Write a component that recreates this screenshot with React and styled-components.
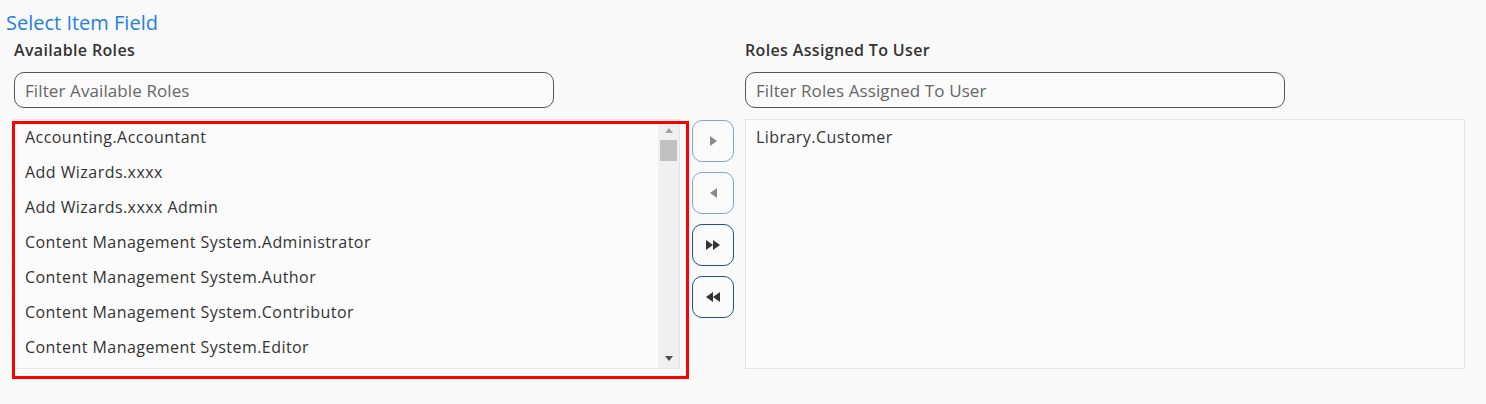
import React, { useState } from 'react';
import styled, { createGlobalStyle } from 'styled-components';

const GlobalStyle = createGlobalStyle`
  body {
    margin: 0;
    min-height: 404px;
    background: #f9f9f9;
    font-family: "Open Sans", "Noto Sans", sans-serif;
  }
`;

const Page = styled.div`
  padding: 10px 6px 20px 6px;
`;

const Title = styled.h2`
  margin: 0;
  font-size: 20px;
  font-weight: 400;
  line-height: 26px;
  color: #1f7fe5;
`;

const Columns = styled.div`
  display: flex;
  align-items: flex-start;
  margin-top: 2px;
  padding-left: 8px;
`;

const Column = styled.div`
  display: flex;
  flex-direction: column;
  width: ${p => p.$width}px;
`;

const Label = styled.div`
  font-size: 16px;
  font-weight: 600;
  color: #333;
  line-height: 24px;
  letter-spacing: 0.35px;
`;

const Filter = styled.input`
  box-sizing: border-box;
  width: 540px;
  height: 36px;
  margin-top: 10px;
  padding: 0 10px;
  border: 1px solid #555;
  border-radius: 10px;
  background: #fafafa;
  font-family: inherit;
  font-size: 17px;
  letter-spacing: 0.1px;
  color: #333;
  outline: none;

  &::placeholder {
    color: #666;
  }
`;

const ListWrap = styled.div`
  position: relative;
  margin-top: 11px;
  padding-bottom: ${p => (p.$highlight ? 10 : 0)}px;

  &::after {
    content: '';
    position: absolute;
    top: 2px;
    left: -2px;
    right: -9px;
    bottom: 0;
    border: 3px solid #ff0000;
    pointer-events: none;
    display: ${p => (p.$highlight ? 'block' : 'none')};
  }
`;

const ListBox = styled.div`
  box-sizing: border-box;
  display: flex;
  height: 250px;
  border: 1px solid #e4e4e4;
  background: #fbfbfb;
  overflow: hidden;
`;

const Options = styled.div`
  flex: 1;
  overflow: hidden;
`;

const Option = styled.div`
  height: 35px;
  line-height: 35px;
  padding-left: 10px;
  font-size: 16px;
  letter-spacing: 0.45px;
  color: #333;
  white-space: nowrap;
  cursor: default;
`;

const ScrollTrack = styled.div`
  width: 21px;
  background: #f0f0f0;
  display: flex;
  flex-direction: column;
  align-items: center;
`;

const ScrollArrow = styled.div`
  width: 0;
  height: 0;
  border-left: 4px solid transparent;
  border-right: 4px solid transparent;
  ${p => (p.$down
    ? 'border-top: 5px solid #505050; margin-top: auto; margin-bottom: 7px;'
    : 'border-bottom: 5px solid #a3a3a3; margin-top: 8px;')}
`;

const ScrollThumb = styled.div`
  width: 17px;
  height: 21px;
  margin-top: 7px;
  background: #c1c1c1;
`;

const Buttons = styled.div`
  display: flex;
  flex-direction: column;
  gap: 10px;
  margin: 82px 11px 0 12px;
`;

const MoveButton = styled.button`
  box-sizing: border-box;
  width: 42px;
  height: 42px;
  border-radius: 10px;
  background: #fafafa;
  border: 1px solid ${p => (p.disabled ? '#7ea6d3' : '#1d5196')};
  display: flex;
  align-items: center;
  justify-content: center;
  padding: 0;
  cursor: ${p => (p.disabled ? 'default' : 'pointer')};
`;

const Triangle = styled.span`
  width: 0;
  height: 0;
  border-top: 5px solid transparent;
  border-bottom: 5px solid transparent;
  ${p => (p.$left
    ? `border-right: 7px solid ${p.$color};`
    : `border-left: 7px solid ${p.$color};`)}
`;

const availableRoles = [
  'Accounting.Accountant',
  'Add Wizards.xxxx',
  'Add Wizards.xxxx Admin',
  'Content Management System.Administrator',
  'Content Management System.Author',
  'Content Management System.Contributor',
  'Content Management System.Editor',
];

const assignedRoles = ['Library.Customer'];

const Arrows = ({ count, left, color }) => (
  <>
    {Array.from({ length: count }).map((_, i) => (
      <Triangle key={i} $left={left} $color={color} />
    ))}
  </>
);

const App = () => {
  const [available] = useState(availableRoles);
  const [assigned] = useState(assignedRoles);

  return (
    <Page>
      <GlobalStyle />
      <Title>Select Item Field</Title>
      <Columns>
        <Column $width={666}>
          <Label>Available Roles</Label>
          <Filter placeholder="Filter Available Roles" />
          <ListWrap $highlight>
            <ListBox>
              <Options>
                {available.map(role => (
                  <Option key={role}>{role}</Option>
                ))}
              </Options>
              <ScrollTrack>
                <ScrollArrow />
                <ScrollThumb />
                <ScrollArrow $down />
              </ScrollTrack>
            </ListBox>
          </ListWrap>
        </Column>
        <Buttons>
          <MoveButton disabled>
            <Arrows count={1} color="#8a8a8a" />
          </MoveButton>
          <MoveButton disabled>
            <Arrows count={1} left color="#8a8a8a" />
          </MoveButton>
          <MoveButton>
            <Arrows count={2} color="#333" />
          </MoveButton>
          <MoveButton>
            <Arrows count={2} left color="#333" />
          </MoveButton>
        </Buttons>
        <Column $width={720}>
          <Label>Roles Assigned To User</Label>
          <Filter placeholder="Filter Roles Assigned To User" />
          <ListWrap>
            <ListBox>
              <Options>
                {assigned.map(role => (
                  <Option key={role}>{role}</Option>
                ))}
              </Options>
            </ListBox>
          </ListWrap>
        </Column>
      </Columns>
    </Page>
  );
};

export default App;
